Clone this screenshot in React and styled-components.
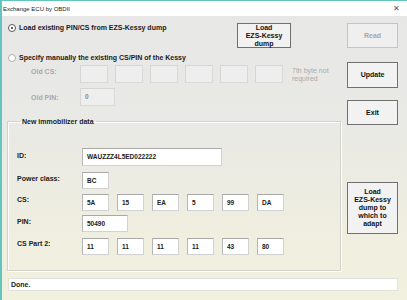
import React from "react";
import styled, { createGlobalStyle } from "styled-components";

const Global = createGlobalStyle`
  html, body { margin: 0; padding: 0; background: #ffffff; }
  body { font-family: "Liberation Sans", Arial, sans-serif; }
`;

const Window = styled.div`
  width: 407px;
  height: 300px;
  box-sizing: border-box;
  border-left: 2px solid #62c6be;
  border-top: 1px solid #62c6be;
  display: flex;
  flex-direction: column;
  overflow: hidden;
`;

const TitleBar = styled.div`
  height: 15px;
  flex: none;
  background: #ffffff;
  display: flex;
  align-items: center;
  justify-content: space-between;
  padding: 0 7px 0 1px;
  font-size: 6px;
  color: #222;
`;

const Close = styled.span`
  font-size: 8px;
  color: #555;
`;

const Body = styled.div`
  flex: 1;
  background: linear-gradient(180deg, #e7e7e7 0%, #e9e9e5 40%, #efeee0 75%, #f2f0de 100%);
  padding: 7px 0 0 6px;
  display: flex;
  flex-direction: column;
`;

const Top = styled.div`
  display: flex;
  align-items: flex-start;
`;

const Main = styled.div`
  width: 333px;
  display: flex;
  flex-direction: column;
`;

const Side = styled.div`
  margin-left: 6px;
  width: 51px;
  display: flex;
  flex-direction: column;
`;

const Row = styled.div`
  display: flex;
  align-items: flex-start;
  margin-top: ${(p) => p.$mt || 0}px;
  height: ${(p) => (p.$h ? `${p.$h}px` : "auto")};
`;

const RadioLabel = styled.label`
  display: flex;
  align-items: center;
  gap: 3px;
  font-size: 7px;
  font-weight: bold;
  color: #1a1a1a;
  height: 9px;
  flex: ${(p) => (p.$grow ? 1 : "none")};
  margin-top: ${(p) => p.$mt || 0}px;
`;

const RadioCircle = styled.span`
  width: 6px;
  height: 6px;
  border-radius: 50%;
  border: 1px solid ${(p) => (p.$on ? "#5a5a5a" : "#b0b0b0")};
  background: #ffffff;
  display: flex;
  align-items: center;
  justify-content: center;
  box-sizing: content-box;
  &::after {
    content: "";
    width: 2px;
    height: 2px;
    border-radius: 50%;
    background: ${(p) => (p.$on ? "#222" : "transparent")};
  }
`;

const Button = styled.div`
  box-sizing: border-box;
  width: ${(p) => p.$w || 51}px;
  height: ${(p) => p.$h || 25}px;
  margin-top: ${(p) => p.$mt || 0}px;
  margin-right: ${(p) => p.$mr || 0}px;
  border: 1px solid ${(p) => (p.$disabled ? "#c4c4c4" : "#707070")};
  background: ${(p) => (p.$disabled ? "#efefef" : "#f2f2f2")};
  color: ${(p) => (p.$disabled ? "#a6a6a6" : "#111")};
  font-size: 7px;
  font-weight: bold;
  line-height: 8px;
  text-align: center;
  display: flex;
  align-items: center;
  justify-content: center;
  flex: none;
`;

const FieldLabel = styled.div`
  width: ${(p) => p.$w}px;
  padding-left: ${(p) => p.$pl || 0}px;
  box-sizing: border-box;
  font-size: 7px;
  font-weight: bold;
  color: ${(p) => (p.$disabled ? "#a8a8a8" : "#1a1a1a")};
  flex: none;
  padding-top: ${(p) => p.$pt || 0}px;
`;

const Fields = styled.div`
  display: flex;
  gap: ${(p) => p.$gap || 7}px;
`;

const Field = styled.div`
  box-sizing: border-box;
  width: ${(p) => p.$w || 28}px;
  height: ${(p) => p.$h || 18}px;
  background: ${(p) => (p.$disabled ? "#eeeeee" : "#ffffff")};
  border: 1px solid ${(p) => (p.$disabled ? "#dadada" : "#d2d2d2")};
  border-top-color: ${(p) => (p.$disabled ? "#d6d6d6" : "#a8a8a8")};
  border-left-color: ${(p) => (p.$disabled ? "#d6d6d6" : "#b6b6b6")};
  font-size: 6.5px;
  font-weight: bold;
  color: ${(p) => (p.$disabled ? "#8a8a8a" : "#1a1a1a")};
  padding: 4px 0 0 4px;
  line-height: 8px;
  flex: none;
`;

const Note = styled.div`
  margin-left: 9px;
  padding-top: 2px;
  font-size: 7px;
  line-height: 8px;
  color: #ababab;
`;

const Group = styled.fieldset`
  margin: 11px 0 0 -1px;
  padding: 0 0 15px 9px;
  width: 334px;
  box-sizing: border-box;
  height: 154px;
  border: 1px solid #d2d2cc;
  box-shadow: inset 1px 1px 0 #ffffff, 1px 1px 0 #ffffff;
  display: flex;
  flex-direction: column;
`;

const Legend = styled.legend`
  font-size: 7px;
  font-weight: bold;
  color: #1a1a1a;
  padding: 0 2px;
  margin-left: 3px;
  line-height: 9px;
`;

const Status = styled.div`
  margin-top: 7px;
  width: 390px;
  height: 13px;
  box-sizing: border-box;
  background: #ffffff;
  border: 1px solid #e2e2dc;
  font-size: 7px;
  font-weight: bold;
  color: #1a1a1a;
  padding: 2px 0 0 2px;
`;

const cs = ["5A", "15", "EA", "5", "99", "DA"];
const cs2 = ["11", "11", "11", "11", "43", "80"];

export default function App() {
  return (
    <>
      <Global />
      <Window>
        <TitleBar>
          <span>Exchange ECU by OBDII</span>
          <Close>✕</Close>
        </TitleBar>
        <Body>
          <Top>
            <Main>
              <Row $h={25}>
                <RadioLabel $grow>
                  <RadioCircle $on />
                  Load existing PIN/CS from EZS-Kessy dump
                </RadioLabel>
                <Button $w={54} $mr={50}>
                  Load
                  <br />
                  EZS-Kessy
                  <br />
                  dump
                </Button>
              </Row>
              <RadioLabel $mt={5}>
                <RadioCircle />
                Specify manually the existing CS/PIN of the Kessy
              </RadioLabel>
              <Row $mt={3}>
                <FieldLabel $w={72} $pl={23} $pt={3} $disabled>
                  Old CS:
                </FieldLabel>
                <Fields>
                  {[0, 1, 2, 3, 4, 5].map((i) => (
                    <Field key={i} $disabled />
                  ))}
                </Fields>
                <Note>
                  7th byte not
                  <br />
                  required
                </Note>
              </Row>
              <Row $mt={5}>
                <FieldLabel $w={72} $pl={23} $pt={6} $disabled>
                  Old PIN:
                </FieldLabel>
                <Field $w={35} $disabled>
                  0
                </Field>
              </Row>
              <Group>
                <Legend>New immobilizer data</Legend>
                <Row $mt={22}>
                  <FieldLabel $w={65} $pt={4}>
                    ID:
                  </FieldLabel>
                  <Field $w={140}>WAUZZZ4L5ED022222</Field>
                </Row>
                <Row $mt={6}>
                  <FieldLabel $w={65} $pt={3}>
                    Power class:
                  </FieldLabel>
                  <Field $w={27} $h={17}>
                    BC
                  </Field>
                </Row>
                <Row $mt={5}>
                  <FieldLabel $w={65} $pt={2}>
                    CS:
                  </FieldLabel>
                  <Fields $gap={8}>
                    {cs.map((v, i) => (
                      <Field key={i} $w={27} $h={17}>
                        {v}
                      </Field>
                    ))}
                  </Fields>
                </Row>
                <Row $mt={4}>
                  <FieldLabel $w={65} $pt={3}>
                    PIN:
                  </FieldLabel>
                  <Field $w={46} $h={17}>
                    50490
                  </Field>
                </Row>
                <Row $mt={6}>
                  <FieldLabel $w={65} $pt={2}>
                    CS Part 2:
                  </FieldLabel>
                  <Fields $gap={8}>
                    {cs2.map((v, i) => (
                      <Field key={i} $w={27} $h={17}>
                        {v}
                      </Field>
                    ))}
                  </Fields>
                </Row>
              </Group>
            </Main>
            <Side>
              <Button $disabled>Read</Button>
              <Button $mt={14} $h={26}>
                Update
              </Button>
              <Button $mt={12}>Exit</Button>
              <Button $mt={57} $h={52}>
                Load
                <br />
                EZS-Kessy
                <br />
                dump to
                <br />
                which to
                <br />
                adapt
              </Button>
            </Side>
          </Top>
          <Status>Done.</Status>
        </Body>
      </Window>
    </>
  );
}
